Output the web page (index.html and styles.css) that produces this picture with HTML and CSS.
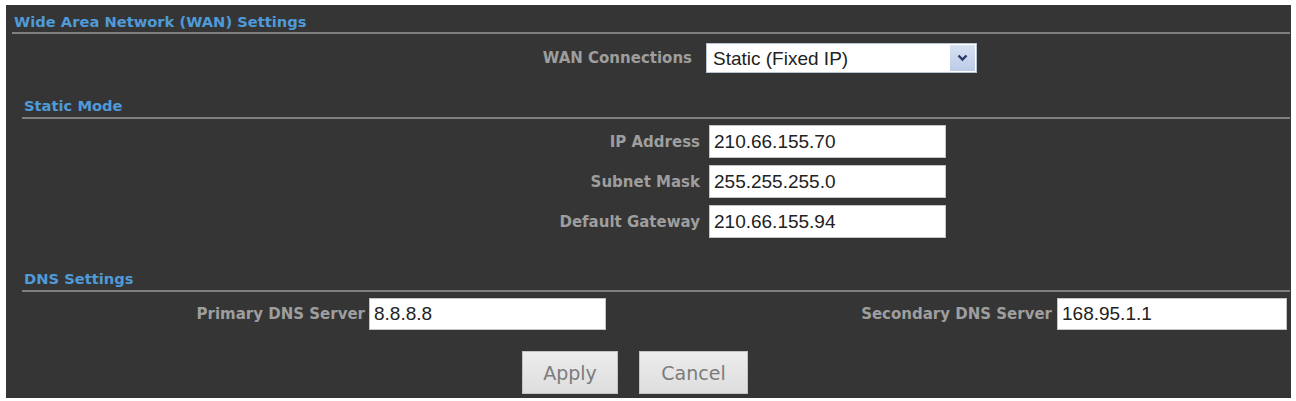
FILE: index.html
```html
<!DOCTYPE html>
<html lang="en">
<head>
    <meta charset="UTF-8">
    <meta name="viewport" content="width=device-width, initial-scale=1.0">
    <title>WAN Settings</title>
    <link rel="stylesheet" href="styles.css">
</head>
<body>
    <div class="panel">
        <h2 class="section-title top">Wide Area Network (WAN) Settings</h2>

        <div class="wan-row">
            <label for="wanType">WAN Connections</label>
            <div class="select-box">
                <select id="wanType">
                    <option>Static (Fixed IP)</option>
                    <option>DHCP (Auto Config)</option>
                    <option>PPPoE (ADSL)</option>
                </select>
                <span class="select-arrow">
                    <svg width="11" height="8" viewBox="0 0 11 8"><path d="M1.5 1.5 L5.5 5.5 L9.5 1.5" fill="none" stroke="#27396b" stroke-width="2.4"/></svg>
                </span>
            </div>
        </div>

        <h2 class="section-title">Static Mode</h2>

        <div class="static-rows">
            <div class="field-row">
                <label for="ip">IP Address</label>
                <input type="text" id="ip" value="210.66.155.70">
            </div>
            <div class="field-row">
                <label for="mask">Subnet Mask</label>
                <input type="text" id="mask" value="255.255.255.0">
            </div>
            <div class="field-row">
                <label for="gw">Default Gateway</label>
                <input type="text" id="gw" value="210.66.155.94">
            </div>
        </div>

        <h2 class="section-title dns">DNS Settings</h2>

        <div class="dns-row">
            <label for="dns1">Primary DNS Server</label>
            <input type="text" id="dns1" value="8.8.8.8">
            <label for="dns2">Secondary DNS Server</label>
            <input type="text" id="dns2" value="168.95.1.1">
        </div>

        <div class="buttons">
            <button class="btn-apply">Apply</button>
            <button class="btn-cancel">Cancel</button>
        </div>
    </div>
</body>
</html>
```

FILE: styles.css
```css
* {
    box-sizing: border-box;
    margin: 0;
    padding: 0;
}

body {
    background: #fff;
    font-family: 'DejaVu Sans', Verdana, sans-serif;
}

.panel {
    margin: 5px 0 0 6px;
    width: 1285px;
    height: 393px;
    background: #353535;
}

.section-title {
    margin: 22px 1px 0 16px;
    padding: 2px 0 2px 2px;
    border-bottom: 2px solid #7f7f7f;
    font-size: 14.7px;
    line-height: 18px;
    font-weight: bold;
    color: #4f9ad8;
}

.section-title.top {
    margin: 0 1px 0 6px;
    padding: 8px 0 1px 2px;
}

.section-title.dns {
    margin-top: 30px;
}

label {
    font-size: 15px;
    font-weight: bold;
    color: #9e9e9e;
    text-align: right;
    white-space: nowrap;
}

input {
    height: 33px;
    padding: 0 4px;
    border: 1px solid #c4c4c4;
    background: #fff;
    font-family: 'Liberation Sans', Arial, sans-serif;
    font-size: 19px;
    color: #222;
    outline: none;
}

/* WAN type row */
.wan-row {
    display: grid;
    grid-template-columns: 686px 271px;
    column-gap: 14px;
    align-items: center;
    margin-top: 9px;
}

.select-box {
    display: flex;
    height: 30px;
    border: 1px solid #b9c3d3;
    background: #fff;
}

.select-box select {
    flex: 1;
    appearance: none;
    -webkit-appearance: none;
    border: none;
    background: transparent;
    padding-left: 6px;
    font-family: 'Liberation Sans', Arial, sans-serif;
    font-size: 19px;
    color: #222;
    outline: none;
}

.select-arrow {
    width: 25px;
    margin: 1px;
    display: flex;
    align-items: center;
    justify-content: center;
    background: linear-gradient(#d6e1f2, #bccbe6);
}

/* static address rows */
.static-rows {
    display: flex;
    flex-direction: column;
    gap: 7px;
    margin-top: 6px;
}

.field-row {
    display: grid;
    grid-template-columns: 694px 237px;
    column-gap: 9px;
    align-items: center;
}

/* dns row */
.dns-row {
    display: grid;
    grid-template-columns: 359px 237px 442px 231px;
    column-gap: 4px;
    align-items: center;
    margin-top: 6px;
}

.dns-row input {
    height: 32px;
}

.dns-row input:last-child {
    margin-left: 1px;
}

.buttons {
    display: flex;
    gap: 21px;
    margin-top: 21px;
    padding-left: 516px;
}

.buttons button {
    height: 43px;
    border: 1px solid #c3c3c3;
    background: linear-gradient(#ececec, #dedede);
    font-family: 'DejaVu Sans', Verdana, sans-serif;
    font-size: 19px;
    color: #7c7c7c;
    cursor: pointer;
}

.btn-apply {
    width: 96px;
}

.btn-cancel {
    width: 109px;
}
```
